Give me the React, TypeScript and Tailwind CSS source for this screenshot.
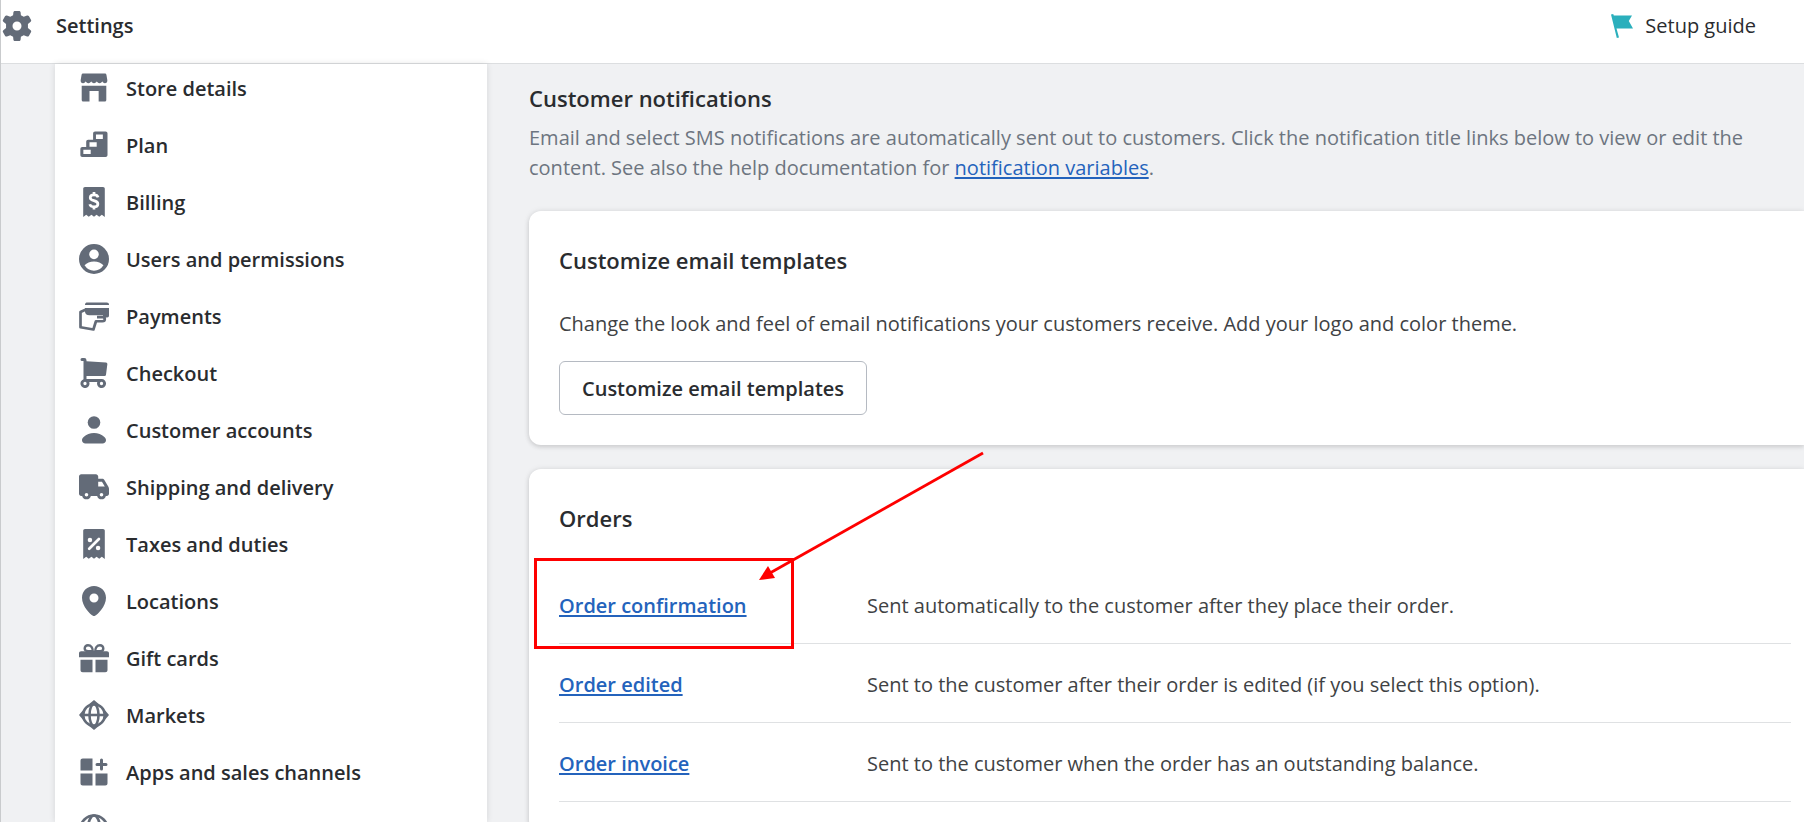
import React from "react";

type IconName =
  | "store" | "plan" | "billing" | "users" | "payments" | "checkout" | "customer"
  | "shipping" | "taxes" | "locations" | "gift" | "markets" | "apps" | "domains";

const receipt =
  "M2.800 1.200C2.800.5 3.300 0 4 0h12c.7 0 1.200.5 1.200 1.200V20l-2-1.500-1.700 1.400-1.800-1.400L10 19.900l-1.700-1.400-1.800 1.400-1.700-1.400-2 1.500z";

const paths: Record<IconName, React.ReactNode> = {
  store: (
    <>
      <path d="M1.700 1.300C1.800.6 2.300.4 2.900.4h14.200c.6 0 1.100.2 1.200.9l.6 3.500c.1 1.200-.6 2-1.600 2-.9 0-1.600-.6-1.800-1.300-.2.700-.9 1.300-1.800 1.300s-1.600-.6-1.800-1.300c-.2.700-1 1.300-1.900 1.300s-1.700-.6-1.900-1.300c-.2.700-.9 1.300-1.800 1.300s-1.600-.6-1.800-1.300c-.2.700-.9 1.300-1.800 1.300-1 0-1.700-.8-1.600-2z" />
      <path d="M1.800 8.500h16.400V18c0 .6-.4 1-1 1h-4.100v-7H7v7H2.800c-.6 0-1-.4-1-1z" />
    </>
  ),
  plan: (
    <path fillRule="evenodd" d="M10.700 1h7c.8 0 1.300.5 1.300 1.300v14.400c0 .8-.5 1.300-1.300 1.300H2.200C1.400 18 .9 17.500.9 16.700v-4c0-.9.500-1.400 1.300-1.400h2.600V7.900c0-.9.500-1.400 1.300-1.400h3.300V2.300C9.400 1.500 9.900 1 10.700 1zm.6 2v3h4.600V3zM7 8.200v2.900h4.800V8.200zM2.900 13.200V16h4.900v-2.800z" />
  ),
  billing: (
    <>
      <path d={receipt} />
      <path d="M12.700 6.900C12.400 5.800 11.300 5.300 10 5.300c-1.500 0-2.500.7-2.500 1.800 0 2.700 5.100 1.300 5.100 4.200 0 1.200-1.100 1.900-2.600 1.900-1.400 0-2.500-.5-2.800-1.700M10 3.400v2M10 13v2" fill="none" stroke="#fff" strokeWidth="1.800" />
    </>
  ),
  users: (
    <path fillRule="evenodd" d="M10 0a10 10 0 1 0 0 20A10 10 0 0 0 10 0zm0 3.700a3.200 3.200 0 1 1 0 6.400 3.200 3.200 0 0 1 0-6.400zM3.700 14.200c1.500-1.500 3.600-2.600 6.300-2.600s4.800 1.100 6.300 2.600A7.800 7.800 0 0 1 10 17.800a7.800 7.800 0 0 1-6.300-3.600z" />
  ),
  payments: (
    <>
      <path d="M4 2.400C4 1.400 4.700 1 5.500 1h13c.9 0 1.500.5 1.500 1.300v.4H4z" />
      <path d="M20 4.700v5c0 .8-.4 1.300-1.200 1.300H16V9.500H7C5 9.500 4 8.600 4 7V4.700z" />
      <path d="M5 5.500 1 7.300v10.200l8.600 1.500 1.700-5.500h4.300c1 0 1.600-.6 1.600-1.500 0-.7-.5-1.200-1.300-1.200H12" fill="none" stroke="currentColor" strokeWidth="1.800" strokeLinejoin="round" />
    </>
  ),
  checkout: (
    <path fillRule="evenodd" d="M1 1a1 1 0 0 1 1-1h1.500A1.500 1.500 0 0 1 5 1.500v.6l13 .9a1 1 0 0 1 .9 1.100l-.9 7a1 1 0 0 1-1 .9H5v2h10a3 3 0 1 1-2.800 2H6.800A3 3 0 1 1 3 14.200V2H2a1 1 0 0 1-1-1zm3 14.900a1.100 1.100 0 1 0 0 2.200 1.100 1.100 0 0 0 0-2.200zm11 0a1.100 1.100 0 1 0 0 2.200 1.100 1.100 0 0 0 0-2.200z" />
  ),
  customer: (
    <>
      <circle cx="10" cy="5" r="4.200" />
      <path d="M4.300 19c-1.300 0-2.300-1-2.300-2.200 0-.9.400-1.600 1.100-2.200C5 12.900 7.300 12 10 12s5 .9 6.900 2.600c.7.600 1.100 1.300 1.100 2.200 0 1.200-1 2.200-2.300 2.200z" />
    </>
  ),
  shipping: (
    <path fillRule="evenodd" d="M1.500 1.500h9.800c.8 0 1.500.7 1.500 1.500v1.500h2.700c.6 0 1.100.3 1.400.8l2.700 4.500c.3.500.4 1 .4 1.500v3.200c0 .8-.6 1.500-1.500 1.500h-.6a3 3 0 0 1-5.800 0H7.900a3 3 0 0 1-5.800 0h-.6c-.9 0-1.500-.7-1.500-1.500V3c0-.8.6-1.500 1.500-1.500zM12.800 6.500v3.200h4.400l-1.900-3.200zM5 14a1.200 1.200 0 1 0 0 2.400A1.200 1.200 0 0 0 5 14zm10 0a1.200 1.200 0 1 0 0 2.400 1.200 1.200 0 0 0 0-2.400z" />
  ),
  taxes: (
    <>
      <path d={receipt} />
      <path d="m6.800 13.200 6.500-6.500" stroke="#fff" strokeWidth="1.800" strokeLinecap="round" />
      <circle cx="7.300" cy="7.300" r="1.500" fill="#fff" />
      <circle cx="12.700" cy="12.600" r="1.500" fill="#fff" />
    </>
  ),
  locations: (
    <path fillRule="evenodd" d="M10 0C5.600 0 2 3.400 2 7.800c0 5.700 5.600 11.300 7.300 12 .4.200 1 .2 1.400 0 1.700-.7 7.300-6.300 7.300-12C18 3.400 14.400 0 10 0zm0 5a3 3 0 1 1 0 6 3 3 0 0 1 0-6z" />
  ),
  gift: (
    <>
      <path d="M9.200 5.500H6C4.600 5.500 3.800 4.700 3.800 3.600S4.700 1.500 6 1.500c2 0 3.200 1.700 3.200 4zM10.800 5.500H14c1.400 0 2.200-.8 2.200-1.900S15.300 1.500 14 1.500c-2 0-3.200 1.700-3.200 4z" fill="none" stroke="currentColor" strokeWidth="1.600" />
      <path d="M1.400 5.500h17.200c.8 0 1.400.6 1.400 1.400v2.600H0V6.900c0-.8.600-1.400 1.400-1.400zM1 11.200h8v8.300H2.500c-.9 0-1.500-.6-1.500-1.500zM11 11.200h8V18c0 .9-.6 1.500-1.500 1.500H11z" />
    </>
  ),
  markets: (
    <>
      <path d="m10 0 3.800 3.200H6.200zM10 20l3.800-3.200H6.200zM0 10l3.200-3.800v7.600zM20 10l-3.200-3.800v7.600z" />
      <g fill="none" stroke="currentColor" strokeWidth="1.700">
        <circle cx="10" cy="10" r="7.200" />
        <ellipse cx="10" cy="10" rx="3" ry="7.200" />
        <path d="M2.300 10h15.400" />
      </g>
    </>
  ),
  apps: (
    <path d="M2.500 1H9v8H1V2.500C1 1.600 1.600 1 2.500 1zM1 11h8v8H2.500C1.600 19 1 18.400 1 17.500zM11 11h8v6.500c0 .9-.6 1.500-1.500 1.500H11zM14 2a1 1 0 0 1 2 0v2h2a1 1 0 0 1 0 2h-2v2a1 1 0 0 1-2 0V6h-2a1 1 0 0 1 0-2h2z" />
  ),
  domains: (
    <g fill="none" stroke="currentColor" strokeWidth="1.800">
      <circle cx="10" cy="10" r="9" />
      <ellipse cx="10" cy="10" rx="4" ry="9" />
      <path d="M1 10h18" />
    </g>
  ),
};

function Icon({ name }: { name: IconName }) {
  return (
    <svg viewBox="0 0 20 20" className="size-[30px] shrink-0 text-[#636b78]" fill="currentColor" aria-hidden="true">
      {paths[name]}
    </svg>
  );
}

const navItems: { icon: IconName; label: string }[] = [
  { icon: "store", label: "Store details" },
  { icon: "plan", label: "Plan" },
  { icon: "billing", label: "Billing" },
  { icon: "users", label: "Users and permissions" },
  { icon: "payments", label: "Payments" },
  { icon: "checkout", label: "Checkout" },
  { icon: "customer", label: "Customer accounts" },
  { icon: "shipping", label: "Shipping and delivery" },
  { icon: "taxes", label: "Taxes and duties" },
  { icon: "locations", label: "Locations" },
  { icon: "gift", label: "Gift cards" },
  { icon: "markets", label: "Markets" },
  { icon: "apps", label: "Apps and sales channels" },
  { icon: "domains", label: "Domains" },
];

const orders = [
  { title: "Order confirmation", text: "Sent automatically to the customer after they place their order." },
  { title: "Order edited", text: "Sent to the customer after their order is edited (if you select this option)." },
  { title: "Order invoice", text: "Sent to the customer when the order has an outstanding balance." },
];

const card =
  "rounded-l-xl bg-white pl-[30px] pt-[34px] pb-[30px] shadow-[0_0_6px_rgba(23,24,24,0.08),0_2px_5px_rgba(0,0,0,0.12)]";
const heading = "text-[22px] font-semibold";

function Annotation() {
  return (
    <div className="pointer-events-none absolute -top-[7px] -left-[25px] h-[91px] w-[260px] border-[3px] border-[#fe0000]">
      <svg viewBox="0 0 230 132" className="absolute -top-[110px] left-[220px] h-[132px] w-[230px]" aria-hidden="true">
        <path d="M226 2 13 122" stroke="#fe0000" strokeWidth="2.800" />
        <path d="m2 129 9-14 7 12z" fill="#fe0000" />
      </svg>
    </div>
  );
}

export default function App() {
  return (
    <div className="flex h-screen flex-col overflow-hidden border-l border-[#c9cbcd] bg-[#f0f1f3] font-['Open_Sans','Noto_Sans',sans-serif] text-[20px] leading-[30px] text-[#2a2c2f]">
      <header className="flex h-16 shrink-0 items-center justify-between border-b border-[#dcdee0] bg-white pr-12 pb-3 pl-px">
        <div className="flex items-center gap-6">
          <svg viewBox="0 0 20 20" className="size-[30px] text-[#636b78]" fill="currentColor" aria-hidden="true">
            <path
              fillRule="evenodd"
              d="M8.600 0h2.800c.5 0 .9.400 1 .9l.2 1.900 1.900 1.100 2.200-.9c.4-.2.900 0 1.200.4l1.400 2.500c.3.400.2 1-.2 1.300L17.300 8.600v2.800l1.800 1.400c.4.300.5.900.2 1.300l-1.400 2.500c-.3.400-.8.600-1.200.4l-2.200-.9-1.900 1.100-.2 1.900c-.1.500-.5.900-1 .9H8.600c-.5 0-.9-.4-1-.9l-.2-1.900-1.900-1.100-2.200.9c-.4.200-.9 0-1.200-.4L.7 14.100c-.3-.4-.2-1 .2-1.300l1.800-1.400V8.600L.9 7.200C.5 6.900.4 6.300.7 5.900l1.400-2.500c.3-.4.8-.6 1.200-.4l2.200.9 1.900-1.100.2-1.900c.1-.5.500-.9 1-.9zM10 7a3 3 0 1 0 0 6 3 3 0 0 0 0-6z"
            />
          </svg>
          <h1 className="font-semibold">Settings</h1>
        </div>
        <a href="#setup" className="flex items-center gap-3">
          <svg viewBox="0 0 22 24" className="h-6 w-[22px]" fill="#2bafbc" aria-hidden="true">
            <path d="M0 .6 2.200 0l.6 1.500H21l-3.200 5.500L22 14.500H5.500L8 23.500l-2.200.5z" />
          </svg>
          Setup guide
        </a>
      </header>

      <div className="flex min-h-0 flex-1">
        <nav className="ml-[54px] w-[432px] shrink-0 overflow-hidden bg-white pl-6 shadow-[0_0_6px_rgba(23,24,24,0.12)]">
          <ul>
            {navItems.map((item) => (
              <li key={item.label} className="h-[57px] pt-[9px]">
                <a href="#section" className="flex items-start gap-[17px] leading-8 font-semibold">
                  <Icon name={item.icon} />
                  {item.label}
                </a>
              </li>
            ))}
          </ul>
        </nav>

        <main className="min-w-0 flex-1 overflow-hidden pt-[19px] pl-[42px]">
          <h2 className={heading}>Customer notifications</h2>
          <p className="mt-[10px] pr-10 text-[#6d7580]">
            Email and select SMS notifications are automatically sent out to customers. Click the notification title links below to view or edit the content. See also the help documentation for{" "}
            <a href="#variables" className="text-[#2463bc] underline decoration-2 underline-offset-2">notification variables</a>.
          </p>

          <section className={`${card} mt-7`}>
            <h2 className={heading}>Customize email templates</h2>
            <p className="mt-[34px] text-[#404244]">
              Change the look and feel of email notifications your customers receive. Add your logo and color theme.
            </p>
            <button type="button" className="mt-[22px] h-[54px] rounded-md border border-[#b5bac2] bg-white px-[22px] pt-0.5 font-semibold">
              Customize email templates
            </button>
          </section>

          <section className={`${card} mt-6`}>
            <h2 className={heading}>Orders</h2>
            <ul className="mt-8 mr-[13px]">
              {orders.map((order, i) => (
                <li key={order.title} className="relative flex h-[79px] border-b border-[#dfe1e3] pt-[26px]">
                  <div className="w-[308px] shrink-0">
                    <a href="#order" className="font-semibold text-[#2463bc] underline decoration-2 underline-offset-2">{order.title}</a>
                  </div>
                  <p className="text-[#404244]">{order.text}</p>
                  {i === 0 && <Annotation />}
                </li>
              ))}
            </ul>
          </section>
        </main>
      </div>
    </div>
  );
}
